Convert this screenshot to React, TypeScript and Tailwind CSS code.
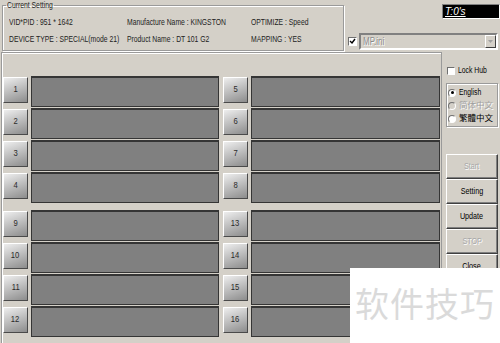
import React from "react";

function S({ children, className = "" }: { children: React.ReactNode; className?: string }) {
  return <span className={"inline-block origin-left scale-x-[0.8] whitespace-nowrap " + className}>{children}</span>;
}

function Slot({ n, wide }: { n: number; wide?: boolean }) {
  return (
    <div className="flex h-[31px] gap-[3px]">
      <div className="mt-[1px] flex h-[26px] w-[25px] items-center justify-center border border-t-white border-l-white border-b-[#4a4a4a] border-r-[#4a4a4a] bg-[linear-gradient(160deg,#eeeeee_0%,#c6c6c6_40%,#8c8c8c_100%)] text-[9px] text-[#2a2a2a]">
        <span className="inline-block scale-x-[0.85]">{n}</span>
      </div>
      <div className={(wide ? "w-[189px]" : "w-[188px]") + " h-[31px] border border-[#353535] border-t-2 bg-[#808080]"} />
    </div>
  );
}

function Column({ start, wide }: { start: number; wide?: boolean }) {
  const g1 = [0, 1, 2, 3].map((i) => start + i);
  const g2 = [0, 1, 2, 3].map((i) => start + 8 + i);
  return (
    <div className="flex flex-col gap-[7px]">
      <div className="flex flex-col gap-[1px]">
        {g1.map((n) => (
          <Slot key={n} n={n} wide={wide} />
        ))}
      </div>
      <div className="flex flex-col gap-[1px]">
        {g2.map((n) => (
          <Slot key={n} n={n} wide={wide} />
        ))}
      </div>
    </div>
  );
}

function Radio({ checked, disabled, label }: { checked?: boolean; disabled?: boolean; label: string }) {
  return (
    <div className="flex h-[13px] items-center gap-[3px] pl-[1px]">
      <span
        className={
          "flex h-[8px] w-[8px] items-center justify-center rounded-full border border-t-[#707070] border-l-[#707070] border-b-white border-r-white " +
          (disabled ? "bg-[#d4d0c8]" : "bg-white")
        }
      >
        {checked && <span className="h-[3px] w-[3px] rounded-full bg-black" />}
      </span>
      <span
        className={
          "font-['Liberation_Sans','Noto_Sans_CJK_TC',sans-serif] text-[8.5px] leading-none whitespace-nowrap " +
          (disabled ? "text-[#a0a0a0] [text-shadow:1px_1px_0_#fff]" : "text-black")
        }
      >
        {label === "English" ? <S>{label}</S> : label}
      </span>
    </div>
  );
}

function Btn({ label, disabled }: { label: string; disabled?: boolean }) {
  return (
    <div className="flex h-[25px] w-[52px] items-center justify-center border border-t-white border-l-white border-b-[#404040] border-r-[#404040] bg-[#d4d0c8] shadow-[inset_-1px_-1px_0_#808080]">
      <span
        className={
          "inline-block scale-x-[0.8] whitespace-nowrap text-[9px] " +
          (disabled ? "text-[#a8a8a8] [text-shadow:1px_1px_0_#fff]" : "text-black")
        }
      >
        {label}
      </span>
    </div>
  );
}

export default function App() {
  return (
    <div className="relative h-[343px] w-[500px] overflow-hidden bg-[#d4d0c8] font-['Liberation_Sans',Arial,sans-serif] text-black">
      {/* top area */}
      <div className="flex h-[52px]">
        <fieldset className="ml-[2px] h-[51px] w-[342px] border border-[#9a9a9a] shadow-[inset_1px_1px_0_#fff,1px_1px_0_#fff]">
          <legend className="ml-[3px] w-[48px] px-[1px] text-[8.5px] leading-[10px] text-[#222]">
            <S>Current Setting</S>
          </legend>
          <div className="grid grid-cols-[118px_124px_90px] grid-rows-[17px_17px] items-center pl-[6px] pt-[4px] text-[8.5px] text-[#222]">
            <S>VID*PID : 951 * 1642</S>
            <S>Manufacture Name : KINGSTON</S>
            <S>OPTIMIZE : Speed</S>
            <S>DEVICE TYPE : SPECIAL(mode 21)</S>
            <S>Product Name : DT 101 G2</S>
            <S>MAPPING : YES</S>
          </div>
        </fieldset>
        <div className="flex flex-1 flex-col">
          <div className="mt-[4px] flex h-[15px] w-[58px] items-center self-end border border-t-[#808080] border-l-[#808080] border-b-white border-r-white bg-black pl-[2px]">
            <span className="text-[10px] italic leading-none text-white underline">T:0's</span>
          </div>
          <div className="mt-[14px] ml-[4px] flex items-center gap-[2px]">
            <span className="flex h-[9px] w-[9px] items-center justify-center border border-t-[#707070] border-l-[#707070] border-b-white border-r-white bg-white">
              <svg width="7" height="7" viewBox="0 0 7 7">
                <path d="M1 3 L3 5 L6 1" stroke="#000" strokeWidth="1.4" fill="none" />
              </svg>
            </span>
            <div className="flex h-[17px] w-[139px] items-center justify-between border-2 border-t-[#808080] border-l-[#808080] border-b-white border-r-white bg-[#d4d0c8]">
              <span className="pl-[2px] text-[10px] leading-none text-[#8c8c8c] [text-shadow:1px_1px_0_#fff]">
                <S>MP.ini</S>
              </span>
              <span className="flex h-[13px] w-[11px] items-center justify-center border border-t-white border-l-white border-b-[#404040] border-r-[#404040] bg-[#d4d0c8]">
                <svg width="5" height="3" viewBox="0 0 5 3">
                  <path d="M0 0 H5 L2.5 3 Z" fill="#a0a0a0" />
                </svg>
              </span>
            </div>
          </div>
        </div>
      </div>

      {/* main area */}
      <div className="flex">
        <div className="ml-[1px] h-[291px] w-[441px] border-t border-l border-r border-[#9a9a9a] pt-[23px] pl-[1px] shadow-[inset_1px_1px_0_#fff]">
          <div className="flex gap-[4px]">
            <Column start={1} />
            <Column start={5} wide />
          </div>
        </div>
        <div className="ml-[2px] flex w-[56px] flex-col">
          <div className="mt-[14px] flex h-[9px] items-center gap-[3px] pl-[3px]">
            <span className="h-[8px] w-[8px] border border-t-[#707070] border-l-[#707070] border-b-white border-r-white bg-white" />
            <span className="text-[8.5px] leading-none">
              <S>Lock Hub</S>
            </span>
          </div>
          <div className="mt-[8px] ml-[2px] h-[44px] w-[52px] border border-[#9a9a9a] pt-[2px] shadow-[inset_1px_1px_0_#fff,1px_1px_0_#fff]">
            <Radio checked label="English" />
            <Radio disabled label="简体中文" />
            <Radio label="繁體中文" />
          </div>
          <div className="mt-[27px] ml-[2px] flex flex-col">
            <Btn label="Start" disabled />
            <Btn label="Setting" />
            <Btn label="Update" />
            <Btn label="STOP" disabled />
            <Btn label="Close" />
          </div>
        </div>
      </div>

      {/* watermark overlay */}
      <div className="absolute bottom-0 left-[350px] right-0 top-[268px] bg-white pl-[5px] pt-[18px]">
        <span className="font-['Noto_Sans_CJK_SC',sans-serif] text-[34px] leading-none tracking-[1px] text-[#dadada]">
          软件技巧
        </span>
      </div>
    </div>
  );
}
